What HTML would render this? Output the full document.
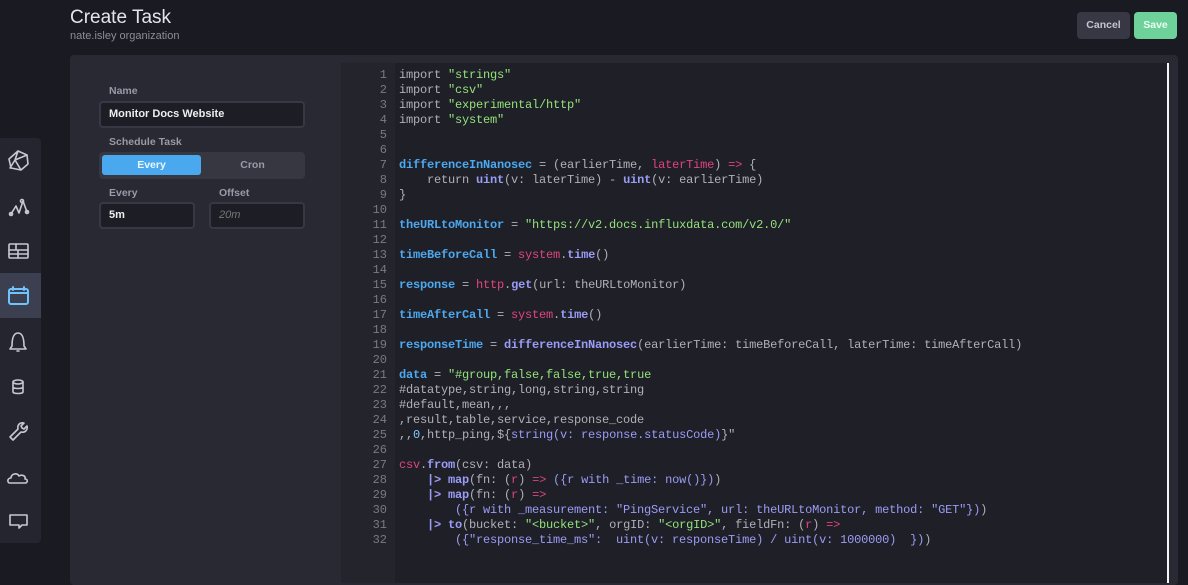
<!DOCTYPE html>
<html><head><style>
*{margin:0;padding:0;box-sizing:border-box}
body{width:1188px;height:575px;background:#1a1a22;font-family:"Liberation Sans",sans-serif;position:relative;overflow:hidden}
.abs{position:absolute}
h1{position:absolute;left:70px;top:7px;font-size:19px;font-weight:normal;color:#e4e4ea}
.sub{left:70px;top:30px;font-size:11px;color:#8d8d99}
.btn{top:12px;height:27px;border-radius:4px;font-size:10.5px;font-weight:bold;text-align:center;line-height:27px}
.panel{left:70px;top:55px;width:1108px;height:530px;background:#292933;border-radius:4px}
.lbl{font-size:10.5px;color:#9a9aa8;font-weight:bold}
.inp{background:#1d1d25;border:2px solid #383844;border-radius:4px;height:27px;font-size:11px;color:#eee;font-weight:bold;padding-left:8px;line-height:23px}
.gutter{left:341px;top:63px;width:54px;height:520px;background:#24242d}
.code{left:395px;top:63px;width:773px;height:520px;background:#1f1f27}
.ln{position:absolute;left:341px;top:67px;width:46px;text-align:right;font-family:"Liberation Mono",monospace;font-size:12px;line-height:15px;color:#7a7a86}
pre{position:absolute;left:399px;top:68px;font-family:"Liberation Mono",monospace;font-size:12px;letter-spacing:-0.2px;line-height:15px;color:#b0b0ba}
.s{color:#93e27b}.v{color:#4ca9ef;font-weight:bold}.p{color:#e0457b}.f{color:#9a9cf5;font-weight:bold}.n{color:#b0b0ba}.d{color:#7ecbff}
.side{left:0;top:138px;width:41px;height:405px;background:#25252f;border-radius:0 4px 4px 0}
</style></head><body>
<h1>Create Task</h1>
<div class="abs sub">nate.isley organization</div>
<div class="abs btn" style="left:1077px;width:53px;background:#383845;color:#c5c5cf">Cancel</div>
<div class="abs btn" style="left:1134px;width:43px;background:#6fd19a;color:#e8fff1">Save</div>
<div class="abs panel"></div>
<div class="abs lbl" style="left:109px;top:85px">Name</div>
<div class="abs inp" style="left:99px;top:101px;width:206px">Monitor Docs Website</div>
<div class="abs lbl" style="left:109px;top:136px">Schedule Task</div>
<div class="abs" style="left:99px;top:152px;width:206px;height:27px;background:#373742;border-radius:4px"></div>
<div class="abs" style="left:102px;top:155px;width:99px;height:20px;background:#4aa9ee;border-radius:3px;color:#eaf6ff;font-size:10.5px;font-weight:bold;text-align:center;line-height:20px">Every</div>
<div class="abs" style="left:203px;top:155px;width:99px;height:20px;color:#9a9aa8;font-size:10.5px;font-weight:bold;text-align:center;line-height:20px">Cron</div>
<div class="abs lbl" style="left:109px;top:187px">Every</div>
<div class="abs lbl" style="left:219px;top:187px">Offset</div>
<div class="abs inp" style="left:99px;top:202px;width:96px">5m</div>
<div class="abs inp" style="left:209px;top:202px;width:96px;color:#777;font-weight:normal;font-style:italic">20m</div>
<div class="abs gutter"></div>
<div class="abs code"></div>
<div class="abs" style="left:1167px;top:63px;width:2px;height:520px;background:#f4f4f4"></div>
<div class="ln" style="top:68px">1<br>2<br>3<br>4<br>5<br>6<br>7<br>8<br>9<br>10<br>11<br>12<br>13<br>14<br>15<br>16<br>17<br>18<br>19<br>20<br>21<br>22<br>23<br>24<br>25<br>26<br>27<br>28<br>29<br>30<br>31<br>32</div>
<pre>import <span class="s">"strings"</span>
import <span class="s">"csv"</span>
import <span class="s">"experimental/http"</span>
import <span class="s">"system"</span>


<span class="v">differenceInNanosec</span> = (earlierTime, <span class="p">laterTime</span>) <span class="p">=&gt;</span> {
    return <span class="f">uint</span>(v: laterTime) - <span class="f">uint</span>(v: earlierTime)
}

<span class="v">theURLtoMonitor</span> = <span class="s">"https://v2.docs.influxdata.com/v2.0/"</span>

<span class="v">timeBeforeCall</span> = <span class="p">system</span>.<span class="f">time</span>()

<span class="v">response</span> = <span class="p">http</span>.<span class="f">get</span>(url: theURLtoMonitor)

<span class="v">timeAfterCall</span> = <span class="p">system</span>.<span class="f">time</span>()

<span class="v">responseTime</span> = <span class="f">differenceInNanosec</span>(earlierTime: timeBeforeCall, laterTime: timeAfterCall)

<span class="v">data</span> = <span class="s">"#group,false,false,true,true</span>
#datatype,string,long,string,string
#default,mean,,,
,result,table,service,response_code
,,<span class="d">0</span>,http_ping,${<span class="f" style="font-weight:normal">string(v: response.statusCode)</span>}"

<span class="p">csv</span>.<span class="f">from</span>(csv: data)
    <span class="f">|&gt; map</span>(fn: (<span class="p">r</span>) <span class="p">=&gt;</span> <span class="f" style="font-weight:normal">({r with _time: now()})</span>)
    <span class="f">|&gt; map</span>(fn: (<span class="p">r</span>) <span class="p">=&gt;</span>
        <span class="f" style="font-weight:normal">({r with _measurement: "PingService", url: theURLtoMonitor, method: "GET"})</span>)
    <span class="f">|&gt; to</span>(bucket: <span class="s">"&lt;bucket&gt;"</span>, orgID: <span class="s">"&lt;orgID&gt;"</span>, fieldFn: (<span class="p">r</span>) <span class="p">=&gt;</span>
        <span class="f" style="font-weight:normal">({"response_time_ms":  uint(v: responseTime) / uint(v: 1000000)  })</span>)</pre>
<div class="abs side"></div>
<div class="abs" style="left:0;top:273px;width:41px;height:45px;background:#3b3f50"></div>
<svg class="abs" style="left:0;top:138px" width="41" height="405" fill="none" stroke="#c8c8d2" stroke-width="1.6" stroke-linejoin="round" stroke-linecap="round">
<path d="M18 13l9 4 1 9-7 6-10-2-2-9z M18 13l-3 9 6 10 M15 22l12-5 M15 22l-5 8"/>
<path d="M11 76l5-8 3 7 4-12 4 11"/><circle cx="11" cy="76" r="1.5"/><circle cx="22" cy="63" r="1.5"/><circle cx="27" cy="74" r="1.5"/>
<rect x="9" y="106" width="19" height="14" rx="1"/><path d="M9 112h19 M9 116h19 M18 112v8 M16 106v6"/>
<rect x="9" y="151" width="19" height="15" rx="2" stroke="#6fc3ff" stroke-width="2"/><path d="M9 155h19 M13 149v3 M24 149v3" stroke="#6fc3ff" stroke-width="2"/>
<path d="M12 208c0-9 2-13 6-13s6 4 6 13l2 3h-16z M17 213h2"/>
<ellipse cx="18" cy="244" rx="5" ry="2"/><path d="M13 244v10c0 2 10 2 10 0v-10 M13 249c0 2 10 2 10 0"/>
<path d="M10 299l8-8c-1-4 2-7 6-6l-3 3 1 2 2 1 3-3c1 4-2 7-6 6l-8 8z"/>
<path d="M10 345c-3 0-3-5 1-5 0-4 6-6 8-2 3-2 7 0 6 3 3 0 3 4 0 4z"/>
<path d="M10 377h17v10h-5l-3 3v-3h-9z"/>
</svg>
</body></html>
